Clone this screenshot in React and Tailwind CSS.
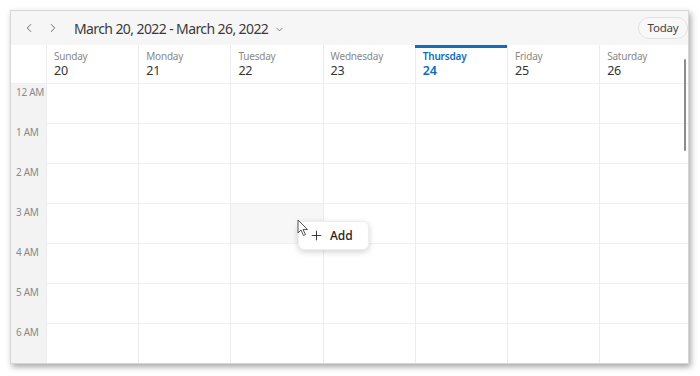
import React from "react";
import { ChevronLeft, ChevronRight, ChevronDown, Plus } from "lucide-react";

const days = [
  { name: "Sunday", num: 20 },
  { name: "Monday", num: 21 },
  { name: "Tuesday", num: 22 },
  { name: "Wednesday", num: 23 },
  { name: "Thursday", num: 24, today: true },
  { name: "Friday", num: 25 },
  { name: "Saturday", num: 26 },
];

const hours = ["12 AM", "1 AM", "2 AM", "3 AM", "4 AM", "5 AM", "6 AM"];

const Cursor = () => (
  <svg width="12" height="18" viewBox="0 0 12 18" className="absolute left-[-1px] top-[-2px]">
    <path d="M1 1 L1 14 L4 11 L6.5 16.5 L8.5 15.5 L6 10.5 L10.5 10.5 Z" fill="white" stroke="#555" strokeWidth="1" strokeLinejoin="round" />
  </svg>
);

export default function App() {
  return (
    <div className="w-[700px] h-[376px] bg-white overflow-hidden font-['Noto_Sans',sans-serif]">
      <div className="relative ml-[10px] mt-[10px] w-[679px] h-[354px] bg-white border border-[#d6d6d6] shadow-[2px_3px_6px_rgba(0,0,0,0.35)] overflow-hidden">
        {/* Header bar */}
        <div className="h-[34px] bg-[#f6f6f6] flex items-center">
          <button className="ml-[10px] w-[16px] flex justify-center text-[#555]">
            <ChevronLeft size={14} strokeWidth={1.5} />
          </button>
          <button className="ml-[8px] w-[16px] flex justify-center text-[#555]">
            <ChevronRight size={14} strokeWidth={1.5} />
          </button>
          <span className="ml-[13px] text-[14px] tracking-[-0.6px] text-[#3a3a3a]">
            March 20, 2022 - March 26, 2022
          </span>
          <ChevronDown size={11} strokeWidth={1.6} className="ml-[6px] mt-[2px] text-[#555]" />
          <button className="ml-auto h-[22px] w-[50px] rounded-full border border-[#e2e2e2] bg-[#f8f8f8] text-[11.5px] tracking-[-0.2px] text-[#444]">
            Today
          </button>
        </div>

        {/* Day header row */}
        <div className="flex h-[39px] border-b border-[#efefef]">
          <div className="w-[35px] shrink-0" />
          {days.map((d) => (
            <div
              key={d.name}
              className={`relative w-[92.2px] shrink-0 border-l border-[#ececec] pl-[7px] pt-[6px] leading-none tracking-[-0.2px] ${
                d.today ? "text-[#0f6cbd]" : "text-[#333]"
              }`}
            >
              {d.today && <div className="absolute left-[-1px] right-0 top-0 h-[3px] bg-[#0f6cbd]" />}
              <div className={`text-[10px] ${d.today ? "font-semibold" : "text-[#888]"}`}>{d.name}</div>
              <div className={`mt-[4px] text-[12.5px] ${d.today ? "font-semibold" : ""}`}>{d.num}</div>
            </div>
          ))}
        </div>

        {/* Body */}
        <div className="flex">
          <div className="w-[35px] shrink-0 bg-[#f3f3f3]">
            {hours.map((h) => (
              <div key={h} className="h-[40px] pl-[5px] pt-[3px] text-[10px] tracking-[-0.3px] whitespace-nowrap text-[#8a8a8a] leading-none">
                {h}
              </div>
            ))}
          </div>
          {days.map((d, di) => (
            <div key={d.name} className="w-[92.2px] shrink-0 border-l border-[#ececec]">
              {hours.map((h, hi) => (
                <div
                  key={h}
                  className={`h-[40px] border-b border-[#f0f0f0] ${di === 2 && hi === 3 ? "bg-[#f7f7f7]" : ""}`}
                />
              ))}
            </div>
          ))}
        </div>

        {/* Scrollbar */}
        <div className="absolute right-[2px] top-[48px] w-[2px] h-[92px] bg-[#8c8c8c] rounded-full" />

        {/* Add flyout */}
        <div className="absolute left-[287px] top-[210px] w-[71px] h-[29px] bg-white rounded-[6px] shadow-[0_2px_6px_rgba(0,0,0,0.18)] border border-[#eeeeee] flex items-center">
          <Plus size={15} strokeWidth={1.4} className="ml-[10px] text-[#222]" />
          <span className="ml-[6px] text-[12px] font-medium text-[#222]">Add</span>
        </div>
        <div className="absolute left-[287px] top-[210px] w-[12px] h-[18px]">
          <Cursor />
        </div>
      </div>
    </div>
  );
}
